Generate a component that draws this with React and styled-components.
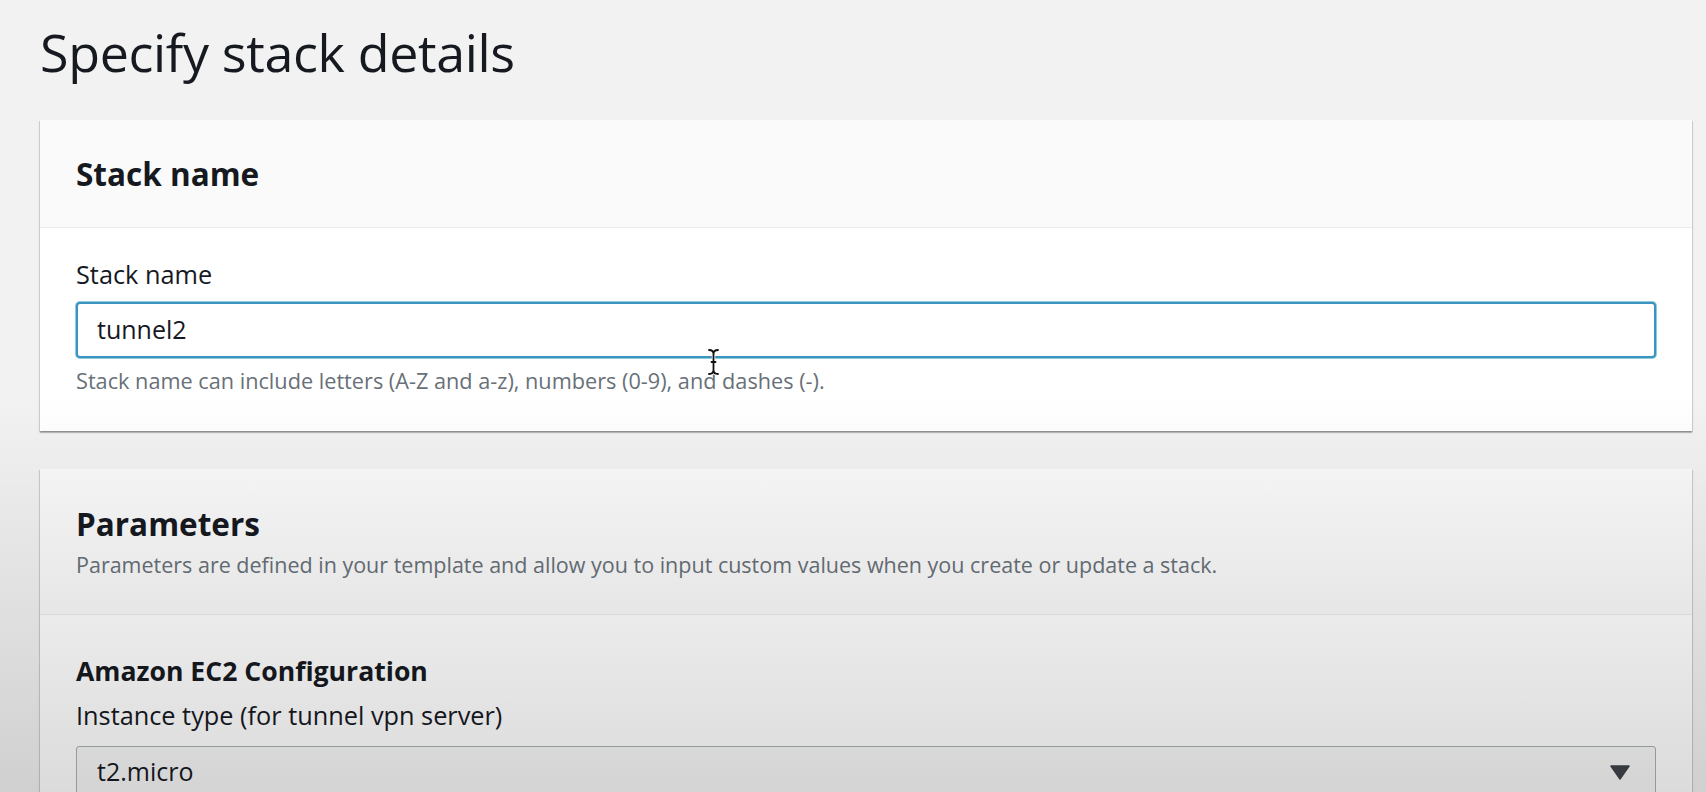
import React from "react";
import styled, { createGlobalStyle } from "styled-components";

const GlobalStyle = createGlobalStyle`
  html, body {
    margin: 0;
    padding: 0;
    overflow: hidden;
    background: #f2f2f2;
    font-family: "Open Sans", "Noto Sans", sans-serif;
    color: #16191f;
  }
  * { box-sizing: border-box; }
`;

const Page = styled.div`
  position: relative;
  height: 792px;
  overflow: hidden;
  padding: 21px 14px 0 40px;
`;

const Title = styled.h1`
  margin: 0 0 37px;
  font-size: 52px;
  line-height: 1.2;
  font-weight: 400;
  letter-spacing: -0.35px;
  color: #16191f;
`;

const Card = styled.section`
  background: #ffffff;
  margin-bottom: 38px;
  box-shadow: 0 2px 1px 0 rgba(0, 0, 0, 0.22), 1px 1px 1px 0 rgba(0, 0, 0, 0.12),
    -1px 1px 1px 0 rgba(0, 0, 0, 0.12);
`;

const CardHeader = styled.header`
  background: #fafafa;
  border-bottom: 1px solid #eaeded;
  padding: ${(p) => (p.$withDesc ? "36px 36px 35px" : "35px 36px 34px")};
`;

const CardTitle = styled.h2`
  margin: 0;
  font-size: 31.5px;
  line-height: 1.2;
  font-weight: 700;
`;

const CardDesc = styled.p`
  margin: 7px 0 0;
  font-size: 21.5px;
  line-height: 1.35;
  color: #687078;
`;

const CardBody = styled.div`
  padding: ${(p) => (p.$top ? `${p.$top}px` : "31px")} 36px 36px;
`;

const SectionTitle = styled.h3`
  margin: 0 0 12px;
  font-size: 26.6px;
  line-height: 1.25;
  font-weight: 700;
`;

const Label = styled.label`
  display: block;
  font-size: 25.3px;
  line-height: 1.25;
  margin-bottom: ${(p) => p.$gap || 11}px;
`;

const Input = styled.div`
  height: 56px;
  display: flex;
  align-items: center;
  padding: 0 19px 2px;
  border: 2px solid #3b93c0;
  box-shadow: 0 0 0 1px rgba(96, 178, 214, 0.7);
  border-radius: 4px;
  background: #fff;
  font-size: 25px;
  color: #16191f;
`;

const Help = styled.p`
  margin: 8px 0 0;
  font-size: 21.7px;
  line-height: 1.35;
  color: #687078;
`;

const Select = styled.div`
  height: 56px;
  display: flex;
  align-items: center;
  justify-content: space-between;
  padding: 0 25px 6px 20px;
  border: 1px solid #a9b1b3;
  border-radius: 3px;
  background: #f7f7f7;
  font-size: 25px;
  color: #16191f;
`;

const Caret = styled.svg`
  width: 20px;
  height: 15px;
  flex: none;
  margin-top: 4px;
`;

const Shade = styled.div`
  position: absolute;
  inset: 0;
  pointer-events: none;
  background: linear-gradient(
    to bottom,
    rgba(0, 0, 0, 0) 0%,
    rgba(0, 0, 0, 0) 50%,
    rgba(0, 0, 0, 0.14) 100%
  );
`;

const Cursor = styled.svg`
  position: absolute;
  left: 707px;
  top: 348px;
  width: 13px;
  height: 28px;
  pointer-events: none;
`;

export default function App() {
  return (
    <>
      <GlobalStyle />
      <Page>
        <Title>Specify stack details</Title>

        <Card>
          <CardHeader>
            <CardTitle>Stack name</CardTitle>
          </CardHeader>
          <CardBody>
            <Label>Stack name</Label>
            <Input>tunnel2</Input>
            <Help>Stack name can include letters (A-Z and a-z), numbers (0-9), and dashes (-).</Help>
          </CardBody>
        </Card>

        <Card>
          <CardHeader $withDesc>
            <CardTitle>Parameters</CardTitle>
            <CardDesc>
              Parameters are defined in your template and allow you to input custom values when you
              create or update a stack.
            </CardDesc>
          </CardHeader>
          <CardBody $top={40}>
            <SectionTitle>Amazon EC2 Configuration</SectionTitle>
            <Label $gap={14}>Instance type (for tunnel vpn server)</Label>
            <Select>
              <span>t2.micro</span>
              <Caret viewBox="0 0 20 15">
                <path d="M1 1 H19 L10 14 Z" fill="#3f444b" stroke="#3f444b" strokeLinejoin="round" strokeWidth="1.5" />
              </Caret>
            </Select>
          </CardBody>
        </Card>

        <Shade />
        <Cursor viewBox="0 0 13 28">
          <g fill="none" strokeLinecap="round">
            <path
              d="M2 2 Q6.5 2 6.5 6 Q6.5 2 11 2 M6.5 6 V22 M2 26 Q6.5 26 6.5 22 Q6.5 26 11 26 M4.5 14 H8.5"
              stroke="#ffffff"
              strokeWidth="3.4"
            />
            <path
              d="M2 2 Q6.5 2 6.5 6 Q6.5 2 11 2 M6.5 6 V22 M2 26 Q6.5 26 6.5 22 Q6.5 26 11 26 M4.5 14 H8.5"
              stroke="#111111"
              strokeWidth="1.8"
            />
          </g>
        </Cursor>
      </Page>
    </>
  );
}
